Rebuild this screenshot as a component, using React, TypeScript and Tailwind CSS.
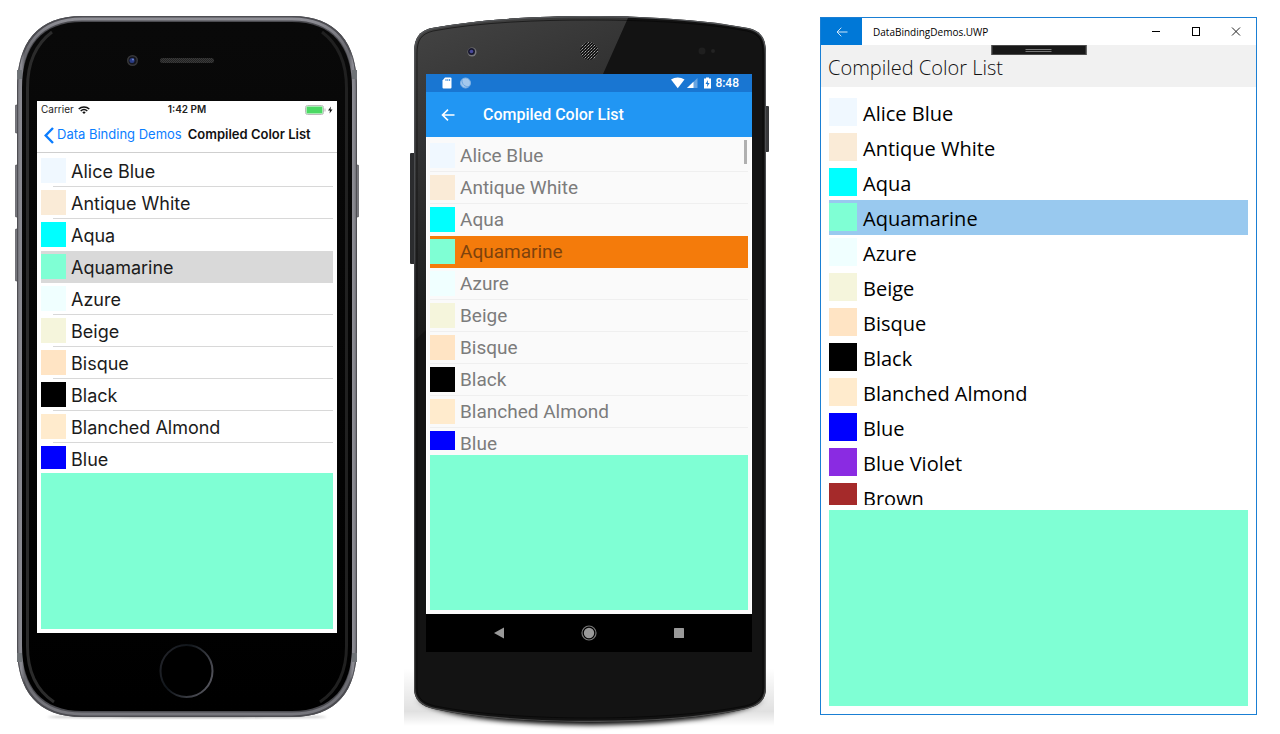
import { useState } from "react";
import type { ReactNode } from "react";

type NamedColor = { name: string; swatch: string };

const COLORS: NamedColor[] = [
  { name: "Alice Blue", swatch: "bg-[#f0f8ff]" },
  { name: "Antique White", swatch: "bg-[#faebd7]" },
  { name: "Aqua", swatch: "bg-[#00ffff]" },
  { name: "Aquamarine", swatch: "bg-[#7fffd4]" },
  { name: "Azure", swatch: "bg-[#f0ffff]" },
  { name: "Beige", swatch: "bg-[#f5f5dc]" },
  { name: "Bisque", swatch: "bg-[#ffe4c4]" },
  { name: "Black", swatch: "bg-[#000000]" },
  { name: "Blanched Almond", swatch: "bg-[#ffebcd]" },
  { name: "Blue", swatch: "bg-[#0000ff]" },
  { name: "Blue Violet", swatch: "bg-[#8a2be2]" },
  { name: "Brown", swatch: "bg-[#a52a2a]" },
];

type ListProps = {
  count: number;
  selected: number;
  onSelect: (index: number) => void;
  listClass: string;
  rowClass: string;
  activeClass: string;
  idleClass: string;
  swatchClass: string;
  labelClass: string;
  divider?: ReactNode;
};

function ColorList(p: ListProps) {
  return (
    <ul className={p.listClass}>
      {COLORS.slice(0, p.count).map((color, i) => (
        <li key={color.name}>
          <button
            type="button"
            aria-pressed={i === p.selected}
            onClick={() => p.onSelect(i)}
            className={`relative flex w-full text-left ${p.rowClass} ${i === p.selected ? p.activeClass : p.idleClass}`}
          >
            <span className={`shrink-0 ${p.swatchClass} ${color.swatch}`} />
            <span className={p.labelClass}>{color.name}</span>
            {i !== p.selected && i + 1 !== p.selected && p.divider}
          </button>
        </li>
      ))}
    </ul>
  );
}

function IPhoneShell() {
  return (
    <svg className="absolute inset-0 size-full" viewBox="15 16 344 704" aria-hidden="true">
      <defs>
        <linearGradient id="ios-rim" x1="0" x2="1" y1="0" y2="0">
          <stop offset="0" stopColor="#5b5b60" />
          <stop offset="0.012" stopColor="#96969e" />
          <stop offset="0.022" stopColor="#4b4b50" />
          <stop offset="0.978" stopColor="#4b4b50" />
          <stop offset="0.988" stopColor="#96969e" />
          <stop offset="1" stopColor="#5b5b60" />
        </linearGradient>
        <linearGradient id="ios-edge" x1="0" x2="0" y1="0" y2="1">
          <stop offset="0" stopColor="#8f8f96" />
          <stop offset="0.050" stopColor="#85858c" stopOpacity="0.500" />
          <stop offset="0.950" stopColor="#85858c" stopOpacity="0.500" />
          <stop offset="1" stopColor="#77777d" />
        </linearGradient>
        <linearGradient id="ios-home" x1="0" x2="1" y1="0.200" y2="0.700">
          <stop offset="0" stopColor="#24252b" />
          <stop offset="0.350" stopColor="#10151a" />
          <stop offset="1" stopColor="#55555d" />
        </linearGradient>
        <pattern id="ios-mesh" width="2" height="2" patternUnits="userSpaceOnUse">
          <rect width="2" height="2" fill="#3a3a3a" />
          <rect width="1" height="1" fill="#222" />
          <rect x="1" y="1" width="1" height="1" fill="#222" />
        </pattern>
        <linearGradient id="ios-glass" x1="0" x2="0" y1="0" y2="1">
          <stop offset="0" stopColor="#090909" />
          <stop offset="1" stopColor="#000" />
        </linearGradient>
        <filter id="ios-blur" x="-10%" y="-200%" width="120%" height="500%">
          <feGaussianBlur stdDeviation="1" />
        </filter>
      </defs>
      <ellipse cx="187" cy="717" rx="140" ry="1" fill="#999" filter="url(#ios-blur)" />
      <g fill="#77777d" stroke="#44444a" strokeWidth="0.600">
        <rect x="15.300" y="105" width="4" height="28" rx="1" />
        <rect x="15.300" y="165" width="4" height="52" rx="1" />
        <rect x="15.300" y="229" width="4" height="52" rx="1" />
        <rect x="354.700" y="165" width="4" height="52" rx="1" />
      </g>
      <path
        d="M17 88C17 42 38 16 82 16H292C336 16 357 42 357 88V646C357 692 336 717 292 717H82C38 717 17 692 17 646Z"
        fill="url(#ios-rim)"
      />
      <path
        d="M17.500 88C17.500 42 38 16.500 82 16.500H292C336 16.500 356.500 42 356.500 88V646C356.500 692 336 716.500 292 716.500H82C38 716.500 17.500 692 17.500 646Z"
        fill="none"
        stroke="#4e4e53"
      />
      <path
        d="M20 88C20 45 40 19 82 19H292C334 19 354 45 354 88V646C354 689 334 714 292 714H82C40 714 20 689 20 646Z"
        fill="none"
        stroke="url(#ios-edge)"
        strokeWidth="3"
      />
      <g fill="#6f7377">
        <rect x="17" y="70" width="5" height="9" />
        <rect x="352" y="70" width="5" height="9" />
        <rect x="17" y="653" width="5" height="9" />
        <rect x="352" y="653" width="5" height="9" />
      </g>
      <path
        d="M22 88C22 46 42 22 82 22H292C332 22 352 46 352 88V646C352 687 332 711 292 711H82C42 711 22 687 22 646Z"
        fill="url(#ios-glass)"
      />
      <path d="M52 32C36 44 27.500 62 27.500 88V646C27.500 670 36 690 54 702" fill="none" stroke="#2b2b2b" strokeWidth="3" />
      <path d="M322 32C338 44 346.500 62 346.500 88V646C346.500 670 338 690 320 702" fill="none" stroke="#202020" strokeWidth="3" />
      <path d="M60 31C42 44 31 62 31 88V646C31 670 42 690 62 703H312C332 690 343 670 343 646V88C343 62 332 44 314 31Z" fill="url(#ios-glass)" />
      <circle cx="132.500" cy="60.500" r="5.500" fill="#38383a" />
      <circle cx="132.500" cy="60.500" r="4" fill="#15161f" />
      <circle cx="132" cy="60.500" r="2.500" fill="#2a3c85" />
      <circle cx="133" cy="59.500" r="1" fill="#6d83c9" />
      <rect x="160" y="58" width="54" height="5" rx="2.500" fill="url(#ios-mesh)" />
      <circle cx="186.500" cy="671" r="26" fill="#000" stroke="url(#ios-home)" strokeWidth="2" />
    </svg>
  );
}

function IosWifi() {
  return (
    <svg className="h-2 w-3" viewBox="0 0 12 8" fill="none" stroke="#111" strokeWidth="1.500" aria-hidden="true">
      <path d="M0.700 3C3.700 0.200 8.300 0.200 11.300 3" />
      <path d="M2.700 5C4.700 3.200 7.300 3.200 9.300 5" />
      <path d="M4.300 6.200C5.300 5.300 6.700 5.300 7.700 6.200L6 8Z" fill="#111" stroke="none" />
    </svg>
  );
}

function IosPhone() {
  const [selected, setSelected] = useState(3);
  return (
    <section aria-label="iOS" className="relative w-[344px] shrink-0 px-[22px] pt-[85px] pb-[87px]">
      <IPhoneShell />
      <div className="relative flex flex-col bg-white font-['Inter','Liberation_Sans',sans-serif]">
        <div className="grid h-[17px] grid-cols-3 items-center px-1 text-[10px] text-[#222]">
          <span className="flex items-center gap-1">
            Carrier <IosWifi />
          </span>
          <span className="text-center font-semibold">1:42 PM</span>
          <svg className="h-[10px] w-7 justify-self-end" viewBox="0 0 28 10" aria-hidden="true">
            <rect x="0.500" y="0.500" width="18" height="9" rx="2" fill="#fff" stroke="#bbb" />
            <rect x="1.500" y="1.500" width="16" height="7" rx="0.500" fill="#4cd964" />
            <path d="M20 3.500V6.500" stroke="#bbb" />
            <path d="M26 1.500L23 5.500H25L24.500 8.500L27.500 4.500H25.500Z" fill="#111" />
          </svg>
        </div>
        <div className="flex h-[35px] items-center border-b border-[#cfcfcf] pl-[7px]">
          <button type="button" className="flex items-center gap-[3px] text-[13px] whitespace-nowrap text-[#0b7dff]">
            <svg className="h-[17px] w-[10px]" viewBox="0 0 10 17" fill="none" stroke="#0b7dff" strokeWidth="2.400" aria-hidden="true">
              <path d="M9 1L1.700 8.500L9 16" />
            </svg>
            Data Binding Demos
          </button>
          <h1 className="ml-[6px] text-[13px] font-semibold whitespace-nowrap text-[#111]">Compiled Color List</h1>
        </div>
        <div className="flex flex-col gap-1 px-1 pt-[2px] pb-1">
          <ColorList
            count={10}
            selected={selected}
            onSelect={setSelected}
            listClass="h-[314px] overflow-hidden"
            rowClass="h-8 gap-[5px] pt-[3px]"
            activeClass="bg-[#d9d9d9]"
            idleClass=""
            swatchClass="size-[25px]"
            labelClass="text-[18px] leading-[28px] text-[#1b1b1b]"
            divider={<span className="absolute right-0 bottom-0 left-3 h-px bg-[#d8d8d8]" />}
          />
          <div className={`h-[156px] ${COLORS[selected].swatch}`} />
        </div>
      </div>
    </section>
  );
}

function AndroidShell() {
  const body =
    "M414 54C414 38 419 31 432 28C480 19 540 16 590 16C640 16 700 19 748 28C761 31 766 38 766 54V688C766 700 759 706 746 709C700 719 640 722 590 722C540 722 480 719 434 709C421 706 414 700 414 688Z";
  return (
    <svg className="absolute inset-0 size-full" viewBox="404 16 370 718" aria-hidden="true">
      <defs>
        <linearGradient id="droid-gloss" x1="0" x2="0.300" y1="0" y2="1">
          <stop offset="0" stopColor="#474747" />
          <stop offset="0.500" stopColor="#2e2e2e" />
          <stop offset="1" stopColor="#151515" />
        </linearGradient>
        <linearGradient id="droid-rim" x1="0" x2="0" y1="0" y2="1">
          <stop offset="0" stopColor="#55575a" />
          <stop offset="0.500" stopColor="#3b3c3e" />
          <stop offset="1" stopColor="#4a4a4a" />
        </linearGradient>
        <pattern id="droid-mesh" width="3" height="3" patternUnits="userSpaceOnUse">
          <rect width="3" height="3" fill="#141414" />
          <rect width="1" height="1" fill="#a8a8a8" />
          <rect x="2" y="1" width="1" height="1" fill="#777" />
          <rect x="1" y="2" width="1" height="1" fill="#5a5a5a" />
        </pattern>
        <clipPath id="droid-clip">
          <path d={body} />
        </clipPath>
        <filter id="droid-blur" x="-20%" y="-50%" width="140%" height="200%">
          <feGaussianBlur stdDeviation="4 2.500" />
        </filter>
        <linearGradient id="droid-side" x1="0" x2="0" y1="0" y2="1">
          <stop offset="0" stopColor="#000" stopOpacity="0" />
          <stop offset="0.750" stopColor="#000" stopOpacity="0.120" />
          <stop offset="1" stopColor="#000" stopOpacity="0" />
        </linearGradient>
      </defs>
      <rect x="404" y="668" width="370" height="58" fill="url(#droid-side)" />
      <path
        d="M420 700C440 716 500 724 590 725C680 724 740 716 760 700Z"
        fill="#000"
        filter="url(#droid-blur)"
      />
      <rect x="410" y="153" width="6" height="111" rx="1" fill="#2b2c2e" />
      <rect x="764" y="106" width="5" height="46" rx="1" fill="#38393b" />
      <path d={body} fill="#131313" />
      <g clipPath="url(#droid-clip)">
        <path d="M404 0H636L603 74H426V330L404 350Z" fill="url(#droid-gloss)" />
      </g>
      <path d={body} fill="none" stroke="url(#droid-rim)" strokeWidth="2.500" clipPath="url(#droid-clip)" />
      <path
        d="M417 54C417 40 421 34 433 31C480 22 540 20 590 20C640 20 700 22 747 31C759 34 763 40 763 54V688C763 698 757 703 745 706C700 715 640 718 590 718C540 718 480 715 435 706C423 703 417 698 417 688Z"
        fill="none"
        stroke="#000"
        strokeOpacity="0.500"
      />
      <circle cx="472" cy="52" r="4.500" fill="#77777a" />
      <circle cx="471.500" cy="51.500" r="3.500" fill="#1a1a30" />
      <circle cx="471.500" cy="51.500" r="1.800" fill="#4a4a9c" />
      <circle cx="589" cy="51" r="9" fill="url(#droid-mesh)" />
      <circle cx="702" cy="51" r="3.500" fill="#1f1f1f" />
      <circle cx="713" cy="51" r="2" fill="#232323" />
    </svg>
  );
}

function AndroidPhone() {
  const [selected, setSelected] = useState(3);
  return (
    <section aria-label="Android" className="relative w-[370px] shrink-0 px-[22px] pt-[58px] pb-[82px]">
      <AndroidShell />
      <div className="relative flex flex-col bg-[#fafafa] font-['Roboto','Liberation_Sans',sans-serif]">
        <div className="flex h-[18px] items-center bg-[#1976d2] pr-[13px] pl-4 text-white">
          <svg className="h-3 w-[29px]" viewBox="0 0 29 12" aria-hidden="true">
            <path d="M3 0.500H8.500A1 1 0 0 1 9.500 1.500V10.500A1 1 0 0 1 8.500 11.500H1.500A1 1 0 0 1 0.500 10.500V3.500Z" fill="#fff" />
            <path d="M4 2V4M5.800 2V4M7.600 2V4" stroke="#1976d2" strokeWidth="0.800" />
            <circle cx="23.500" cy="6" r="5" fill="#a3c8ed" stroke="#7fb1e5" strokeWidth="1" />
            <path d="M20 3C20 8 23 10 27 9.500" stroke="#6aa5e0" fill="none" />
          </svg>
          <svg className="ml-auto h-3 w-10" viewBox="0 0 40 12" aria-hidden="true">
            <path d="M0 2.500C4 -0.300 9.500 -0.300 13.500 2.500L6.750 11.200Z" fill="#fff" />
            <path d="M26.500 1V11H16Z" fill="#fff" fillOpacity="0.350" />
            <path d="M22.500 4.800V11H16Z" fill="#fff" />
            <path d="M35 0.500H38V1.500H40V11.500H33V1.500H35Z" fill="#fff" />
            <path d="M37 3L34.500 7H36.300L36 10L38.600 6H36.800Z" fill="#1976d2" />
          </svg>
          <span className="ml-1 text-[12px] leading-[18px] font-medium">8:48</span>
        </div>
        <div className="flex h-[45px] items-center bg-[#2196f3] pl-[15px] text-white">
          <button type="button" aria-label="Back">
            <svg className="h-3 w-[14px]" viewBox="0 0 14 12" fill="none" stroke="#fff" strokeWidth="1.600" aria-hidden="true">
              <path d="M13.500 6H1.500M7 0.700L1.500 6L7 11.300" />
            </svg>
          </button>
          <h1 className="ml-7 text-[16px] font-medium">Compiled Color List</h1>
        </div>
        <div className="relative flex flex-col gap-[5px] border-x border-white px-[3px] pt-[3px] pb-1">
          <ColorList
            count={10}
            selected={selected}
            onSelect={setSelected}
            listClass="h-[310px] overflow-hidden"
            rowClass="h-8 gap-[5px] pt-[3px]"
            activeClass="bg-[#f47b0b] text-[#7d420d]"
            idleClass="text-[#7c7c7c]"
            swatchClass="size-[25px]"
            labelClass="text-[19px] leading-[26px]"
            divider={<span className="absolute inset-x-0 bottom-0 h-px bg-[#efefef]" />}
          />
          <div className={`h-[155px] ${COLORS[selected].swatch}`} />
          <span className="absolute top-[3px] right-1 h-6 w-[3px] bg-[#b0b0b0]" />
        </div>
        <div className="flex h-[38px] items-center justify-center gap-[74px] bg-black">
          <button type="button" aria-label="Back">
            <svg className="size-4" viewBox="0 0 16 16" aria-hidden="true">
              <path d="M13 2.500V13.500L3 8Z" fill="#999" />
            </svg>
          </button>
          <button type="button" aria-label="Home">
            <svg className="size-4" viewBox="0 0 16 16" aria-hidden="true">
              <circle cx="8" cy="8" r="7" fill="none" stroke="#777" strokeWidth="1.200" />
              <circle cx="8" cy="8" r="5.200" fill="#999" />
            </svg>
          </button>
          <button type="button" aria-label="Overview">
            <svg className="size-4" viewBox="0 0 16 16" aria-hidden="true">
              <rect x="3" y="3" width="10" height="10" rx="0.500" fill="#999" />
            </svg>
          </button>
        </div>
      </div>
    </section>
  );
}

function UwpWindow() {
  const [selected, setSelected] = useState(3);
  return (
    <section
      aria-label="UWP"
      className="relative mt-px min-w-[400px] flex-1 border border-[#1a7fd4] bg-white font-['Open_Sans','Noto_Sans',sans-serif] text-black"
    >
      <div className="flex h-[27px] items-center">
        <button type="button" aria-label="Back" className="flex h-full w-[41px] items-center justify-center bg-[#0078d7]">
          <svg className="h-[10px] w-3" viewBox="0 0 12 10" fill="none" stroke="#cfe6f8" aria-hidden="true">
            <path d="M11.500 5H1M5.300 0.700L1 5L5.300 9.300" />
          </svg>
        </button>
        <span className="ml-[11px] pt-px text-[10px]">DataBindingDemos.UWP</span>
        <div className="ml-auto flex gap-7 pr-[14px]">
          <button type="button" aria-label="Minimize">
            <svg className="size-3" viewBox="0 0 12 12" stroke="#000" fill="none" aria-hidden="true">
              <path d="M2 5.500H10" />
            </svg>
          </button>
          <button type="button" aria-label="Maximize">
            <svg className="size-3" viewBox="0 0 12 12" stroke="#000" fill="none" aria-hidden="true">
              <rect x="2.500" y="1.500" width="7" height="8" />
            </svg>
          </button>
          <button type="button" aria-label="Close">
            <svg className="size-3" viewBox="0 0 12 12" stroke="#222" fill="none" aria-hidden="true">
              <path d="M2 1.500L10 9.500M10 1.500L2 9.500" />
            </svg>
          </button>
        </div>
      </div>
      <div className="relative flex h-[42px] items-center bg-[#f1f1f1] pt-1 pl-[7px]">
        <h1 className="text-[20px] font-light text-[#111]">Compiled Color List</h1>
        <span className="absolute top-0 left-1/2 flex h-[10px] w-[95px] -translate-x-1/2 flex-col items-center justify-center gap-px border border-[#4a4a4a] bg-[#181818]">
          <span className="h-px w-[26px] bg-[#777]" />
          <span className="h-px w-[26px] bg-[#777]" />
        </span>
      </div>
      <div className="flex flex-col gap-[5px] px-2 pt-2 pb-2">
        <ColorList
          count={12}
          selected={selected}
          onSelect={setSelected}
          listClass="h-[410px] overflow-hidden"
          rowClass="h-[35px] gap-[6px] pt-[3px]"
          activeClass="bg-[#99c9ef]"
          idleClass=""
          swatchClass="size-7"
          labelClass="text-[20px] leading-[32px]"
        />
        <div className={`h-[196px] ${COLORS[selected].swatch}`} />
      </div>
    </section>
  );
}

export default function App() {
  return (
    <main className="flex min-h-screen items-start bg-white pr-[23px] pl-[15px]">
      <div className="flex flex-1 items-start justify-between pt-4">
        <IosPhone />
        <div className="w-[45px] shrink-0" />
        <AndroidPhone />
        <div className="w-[46px] shrink-0" />
        <UwpWindow />
      </div>
    </main>
  );
}
